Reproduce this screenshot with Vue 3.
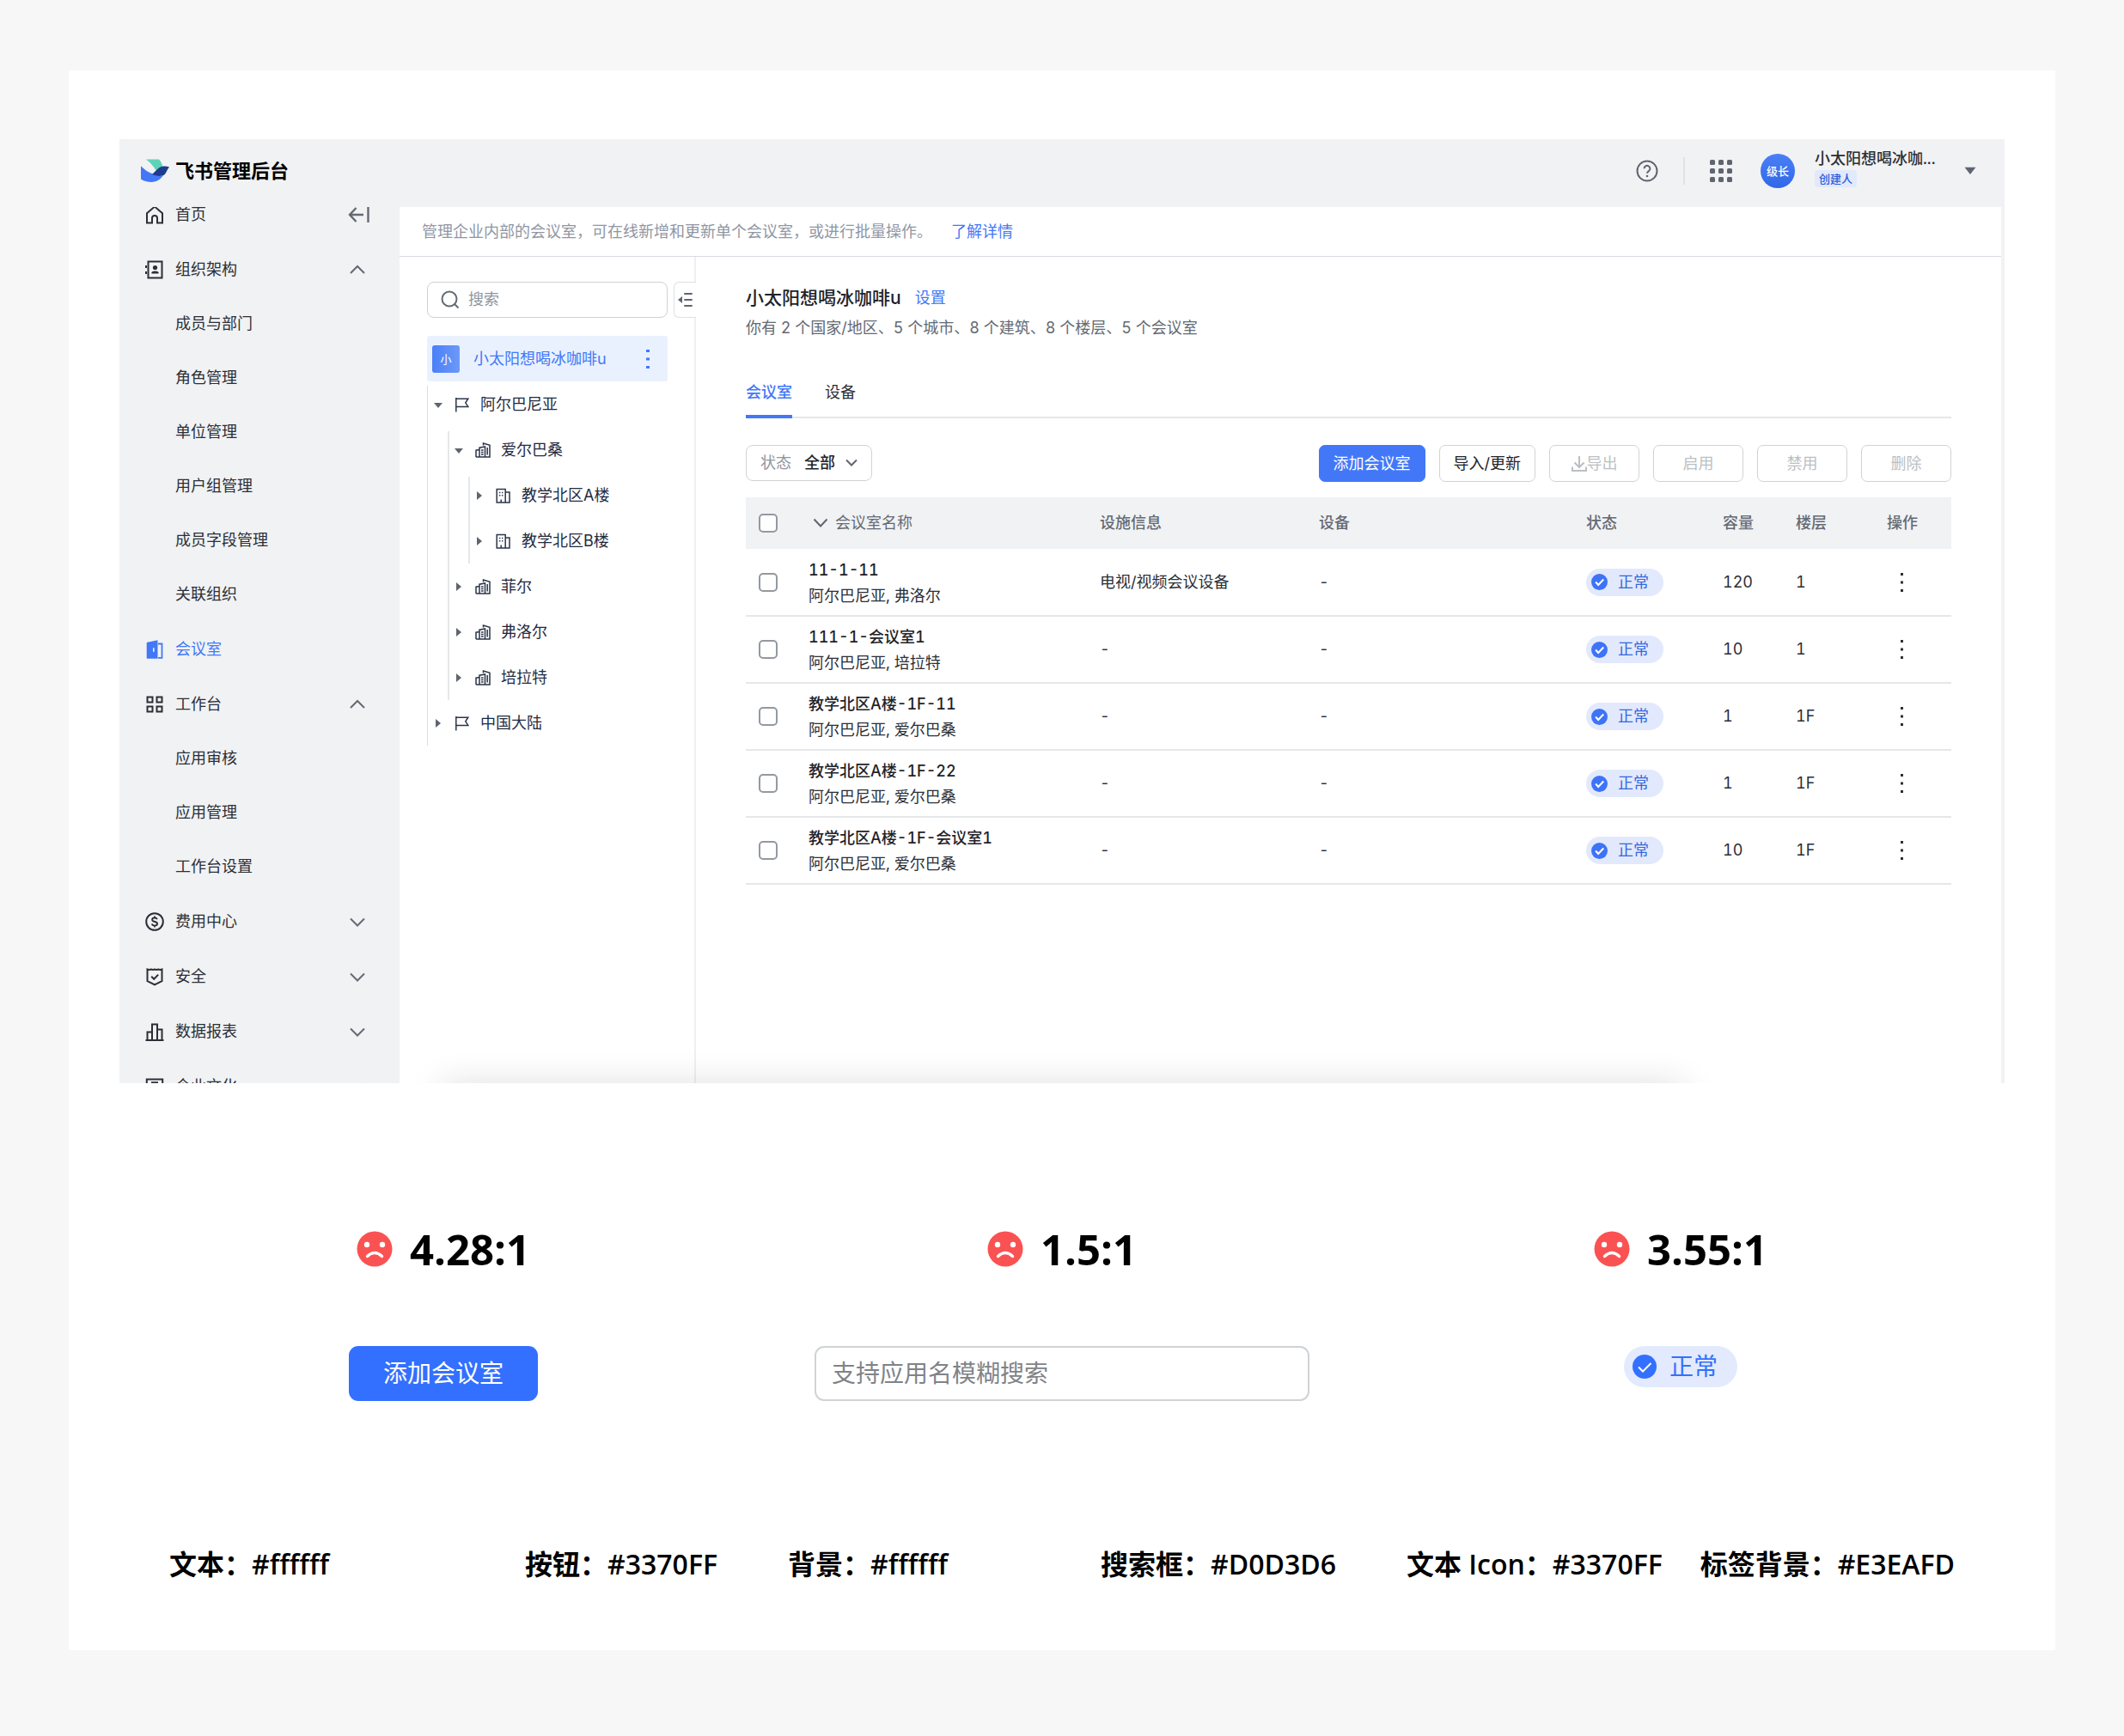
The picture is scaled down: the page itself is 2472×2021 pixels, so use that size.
<script setup>
import { ref } from 'vue'

const icons = {
  home: '<path d="M2 9.2 11 1.6l9 7.6V20.5h-6V15a3 3 0 0 0-6 0v5.500H2z"/>',
  org: '<path d="M3.500 1.500h16v19h-16z"/><path d="M1 6v3M1 13v3" stroke-width="2"/><circle cx="11.500" cy="8.500" r="2.600" fill="currentColor" stroke="none"/><path d="M7.500 15.500v-1.200c0-1 1.500-1.900 4-1.900s4 .9 4 1.900v1.200z" fill="currentColor" stroke="none"/>',
  room: '<path d="M2.500 2.700 14.500.2v21.600h-12a.8.8 0 0 1-.8-.8V3.500a.8.8 0 0 1 .8-.8zM9 9.200v4.600h1.600V9.200z" fill="currentColor" fill-rule="evenodd" stroke="none"/><path d="M15 4.500h4.500v16.300H15" stroke-width="1.800"/>',
  grid: '<path d="M2.500 2.500h6v6h-6zM13.500 2.500h6v6h-6zM2.500 13.500h6v6h-6zM13.500 13.500h6v6h-6z"/>',
  fee: '<circle cx="11" cy="11" r="9.800"/><path d="M13.900 8.300C13.500 7 12.400 6.500 11 6.500c-1.700 0-2.900.8-2.900 2.200 0 3.200 6 1.400 6 4.600 0 1.500-1.300 2.300-3.100 2.300-1.600 0-2.800-.6-3.200-2M11 4.500v2M11 15.500v2" stroke-width="1.800"/>',
  shield: '<path d="M2.500 2.500q2.200.8 4.300 0 2.200.8 4.200 0 2 .8 4.200 0 2.100.8 4.300 0v13.600L11 20.300l-8.500-4.200z"/><path d="m7.200 10.800 3 3 5-5.200"/>',
  bars: '<path d="M.5 21h21M2.500 21V11.500H8V21M8 21V2.500h6V21M14 8.500h5.500V21"/>',
  culture: '<path d="M1.800 2.500h18.400v17H1.800z"/><path d="M7 6.200h8M11 9v7"/>'
}

const nav = [
  { label: '首页', icon: 'home', end: 'collapse' },
  { label: '组织架构', icon: 'org', end: 'up', children: ['成员与部门', '角色管理', '单位管理', '用户组管理', '成员字段管理', '关联组织'] },
  { label: '会议室', icon: 'room', active: true },
  { label: '工作台', icon: 'grid', end: 'up', children: ['应用审核', '应用管理', '工作台设置'] },
  { label: '费用中心', icon: 'fee', end: 'down' },
  { label: '安全', icon: 'shield', end: 'down' },
  { label: '数据报表', icon: 'bars', end: 'down' },
  { label: '企业文化', icon: 'culture', end: 'down' }
]

const ends = {
  up: '<path d="m5 18 8-8 8 8"/>',
  down: '<path d="m5 10.500 8 8 8-8"/>',
  collapse: '<path d="M11.500 6 4 14l7.500 8M4 14h16M25.500 5v18" stroke-width="2.400"/>'
}

const treeIcons = {
  flag: '<path d="M1.800 1v16.500M1.800 2.200h14l-3 4.600 3 4.600h-14"/>',
  city: '<path d="M1 17V9.200l4-.7M5 17V6.200L11.500 5v12M9.500 3.500V1L17 3.200V17H1M7 9h2.600M7 11.500h2.600M7 14h2.600M14.200 6v8.500"/>',
  building: '<path d="M1.200 1.500h10V17h-10zM11.200 5H16v12h-4.800M4 5.500h1.400M7 5.500h1.400M4 8.700h1.400M7 8.700h1.400M6.200 17v-3.500"/>'
}

const tree = [
  {
    label: '阿尔巴尼亚', icon: 'flag', open: true, children: [
      {
        label: '爱尔巴桑', icon: 'city', open: true, children: [
          { label: '教学北区A楼', icon: 'building' },
          { label: '教学北区B楼', icon: 'building' }
        ]
      },
      { label: '菲尔', icon: 'city' },
      { label: '弗洛尔', icon: 'city' },
      { label: '培拉特', icon: 'city' }
    ]
  },
  { label: '中国大陆', icon: 'flag' }
]

const rooms = [
  { name: '11-1-11', place: '阿尔巴尼亚, 弗洛尔', facility: '电视/视频会议设备', device: '-', capacity: 120, floor: '1' },
  { name: '111-1-会议室1', place: '阿尔巴尼亚, 培拉特', facility: '-', device: '-', capacity: 10, floor: '1' },
  { name: '教学北区A楼-1F-11', place: '阿尔巴尼亚, 爱尔巴桑', facility: '-', device: '-', capacity: 1, floor: '1F' },
  { name: '教学北区A楼-1F-22', place: '阿尔巴尼亚, 爱尔巴桑', facility: '-', device: '-', capacity: 1, floor: '1F' },
  { name: '教学北区A楼-1F-会议室1', place: '阿尔巴尼亚, 爱尔巴桑', facility: '-', device: '-', capacity: 10, floor: '1F' }
]

const samples = [
  { kind: 'button', ratio: '4.28:1', colors: ['文本：#ffffff', '按钮：#3370FF'] },
  { kind: 'input', ratio: '1.5:1', colors: ['背景：#ffffff', '搜索框：#D0D3D6'] },
  { kind: 'tag', ratio: '3.55:1', colors: ['文本 Icon：#3370FF', '标签背景：#E3EAFD'] }
]

const status = ref('全部')
const caretDown = 'M0 3h10L5 9z'
const caretRight = 'M2 0v10l6-5z'
</script>

<template>
  <div class="page">
    <main class="card">
      <section class="app">
        <header class="topbar">
          <svg class="logo" viewBox="0 0 33 27" aria-hidden="true">
            <path d="M6 .4h15c2.200 2 4 6 4.600 9.200L18 14.500C15 8.500 11 4 6 .4z" fill="#5fd3b7" />
            <path d="M0 8.200c4 4.300 9 7.800 14 9.400 4 1.800 8 2.400 12 1.500C23 24 18 27 12.500 27 7.500 27 3 25.500 0 23.500z" fill="#4278f8" />
            <path d="M13 17.800C17 15 20 9.500 25 8.700c2.800-.5 5.600-.2 8 .8-2.600 2.700-3.300 6.700-6 9.300-3.800 1.800-9.500 1.500-14-1z" fill="#1d3c91" />
          </svg>
          <h1>飞书管理后台</h1>
          <div class="tools">
            <button class="plain" type="button" aria-label="帮助">
              <svg width="26" height="26" viewBox="0 0 26 26" fill="none" stroke="#5f6570" stroke-width="2">
                <circle cx="13" cy="13" r="11.500" />
                <path d="M9.600 10.300a3.400 3.400 0 1 1 5.300 2.800c-1.200.8-1.900 1.400-1.900 2.700" />
                <circle cx="13" cy="19" r="1.300" fill="#5f6570" stroke="none" />
              </svg>
            </button>
            <span class="divider"></span>
            <button class="plain" type="button" aria-label="应用">
              <svg width="26" height="26" viewBox="0 0 26 26" fill="#5f6570">
                <template v-for="y in 3" :key="y">
                  <rect v-for="x in 3" :key="x" :x="(x - 1) * 10" :y="(y - 1) * 10" width="6" height="6" rx="1.500" />
                </template>
              </svg>
            </button>
          </div>
          <span class="avatar">级长</span>
          <div class="user">
            <strong>小太阳想喝冰咖...</strong>
            <span class="badge">创建人</span>
          </div>
          <button class="plain" type="button" aria-label="账号菜单">
            <svg width="14" height="10" viewBox="0 0 14 10"><path d="M.5.800h13L7 9z" fill="#5f6570" /></svg>
          </button>
        </header>

        <nav class="sidebar">
          <ul class="menu">
            <li v-for="item in nav" :key="item.label">
              <a href="#" class="item" :class="{ active: item.active }">
                <svg class="item-icon" viewBox="0 0 22 22" v-html="icons[item.icon]"></svg>
                <span class="item-label">{{ item.label }}</span>
                <svg v-if="item.end" class="item-end" viewBox="0 0 28 28" v-html="ends[item.end]"></svg>
              </a>
              <a v-for="child in item.children" :key="child" href="#" class="item child">{{ child }}</a>
            </li>
          </ul>
        </nav>

        <div class="panel">
          <p class="banner">管理企业内部的会议室，可在线新增和更新单个会议室，或进行批量操作。<a href="#">了解详情</a></p>

          <aside class="places">
            <div class="search-row">
              <label class="search">
                <svg width="22" height="22" viewBox="0 0 22 22" fill="none" stroke="#646a73" stroke-width="2">
                  <circle cx="10" cy="10" r="8.500" /><path d="m16 16 4.500 4.500" />
                </svg>
                <input type="text" placeholder="搜索" aria-label="搜索" />
              </label>
              <button class="fold" type="button" aria-label="收起">
                <svg width="18" height="18" viewBox="0 0 18 18">
                  <path d="M0 9l5-4v8z" fill="#5f6570" />
                  <path d="M8 2h8M8 9h8M8 16h8" stroke="#5f6570" stroke-width="2" stroke-linecap="round" />
                </svg>
              </button>
            </div>
            <div class="company">
              <span class="company-logo">小</span>
              <a href="#">小太阳想喝冰咖啡u</a>
              <button class="plain" type="button" aria-label="更多">
                <svg width="4" height="22" viewBox="0 0 4 22" fill="#4278f8"><path d="M0 0h4v3H0zM0 9.500h4v3H0zM0 19h4v3H0z" /></svg>
              </button>
            </div>
            <ul class="branch">
              <li v-for="country in tree" :key="country.label">
                <div class="node">
                  <svg class="caret" viewBox="0 0 10 10"><path :d="country.open ? caretDown : caretRight" /></svg>
                  <svg class="node-icon" viewBox="0 0 18 18" v-html="treeIcons[country.icon]"></svg>
                  <span>{{ country.label }}</span>
                </div>
                <ul v-if="country.children" class="branch inner">
                  <li v-for="city in country.children" :key="city.label">
                    <div class="node">
                      <svg class="caret" viewBox="0 0 10 10"><path :d="city.open ? caretDown : caretRight" /></svg>
                      <svg class="node-icon" viewBox="0 0 18 18" v-html="treeIcons[city.icon]"></svg>
                      <span>{{ city.label }}</span>
                    </div>
                    <ul v-if="city.children" class="branch inner">
                      <li v-for="b in city.children" :key="b.label" class="node">
                        <svg class="caret" viewBox="0 0 10 10"><path :d="caretRight" /></svg>
                        <svg class="node-icon" viewBox="0 0 18 18" v-html="treeIcons[b.icon]"></svg>
                        <span>{{ b.label }}</span>
                      </li>
                    </ul>
                  </li>
                </ul>
              </li>
            </ul>
          </aside>

          <section class="content">
            <div class="heading">
              <h2>小太阳想喝冰咖啡u</h2>
              <a href="#">设置</a>
            </div>
            <p class="summary">你有 2 个国家/地区、5 个城市、8 个建筑、8 个楼层、5 个会议室</p>
            <div class="tabs" role="tablist">
              <button class="tab current" type="button" role="tab" aria-selected="true">会议室</button>
              <button class="tab" type="button" role="tab" aria-selected="false">设备</button>
            </div>
            <div class="toolbar">
              <div class="filter">
                <label for="status">状态</label>
                <select id="status" v-model="status"><option>全部</option></select>
                <svg width="14" height="10" viewBox="0 0 14 10" fill="none" stroke="#5f6570" stroke-width="2"><path d="m1 1.500 6 6 6-6" /></svg>
              </div>
              <button class="btn primary" type="button">添加会议室</button>
              <button class="btn" type="button">导入/更新</button>
              <button class="btn" type="button" disabled>
                <svg width="18" height="20" viewBox="0 0 18 20" fill="none" stroke="currentColor" stroke-width="2">
                  <path d="M9 1v13M3.500 8.500 9 14l5.500-5.500M1 13.500V18h16v-4.500" />
                </svg>导出
              </button>
              <button class="btn" type="button" disabled>启用</button>
              <button class="btn" type="button" disabled>禁用</button>
              <button class="btn" type="button" disabled>删除</button>
            </div>
            <table>
              <colgroup>
                <col class="c-check" /><col class="c-name" /><col class="c-facility" /><col />
                <col class="c-status" /><col class="c-capacity" /><col class="c-floor" /><col class="c-action" />
              </colgroup>
              <thead>
                <tr>
                  <th class="check"><input type="checkbox" aria-label="全选" /></th>
                  <th>
                    <span class="sort">
                      <svg width="18" height="12" viewBox="0 0 18 12" fill="none" stroke="#5f6570" stroke-width="2"><path d="m1.500 1.500 7.500 8 7.500-8" /></svg>
                      会议室名称
                    </span>
                  </th>
                  <th>设施信息</th>
                  <th>设备</th>
                  <th>状态</th>
                  <th>容量</th>
                  <th>楼层</th>
                  <th>操作</th>
                </tr>
              </thead>
              <tbody>
                <tr v-for="room in rooms" :key="room.name">
                  <td class="check"><input type="checkbox" :aria-label="room.name" /></td>
                  <td class="title"><div class="name">{{ room.name }}</div><div>{{ room.place }}</div></td>
                  <td>{{ room.facility }}</td>
                  <td>{{ room.device }}</td>
                  <td>
                    <span class="tag">
                      <svg viewBox="0 0 28 28"><circle cx="14" cy="14" r="14" /><path d="m7.500 14 4.500 5 9-9.500" stroke-width="3" /></svg>正常
                    </span>
                  </td>
                  <td>{{ room.capacity }}</td>
                  <td>{{ room.floor }}</td>
                  <td>
                    <button class="plain more" type="button" aria-label="更多操作">
                      <svg width="4" height="22" viewBox="0 0 4 22" fill="#2b2f36"><path d="M0 0h3v3H0zM0 9.500h3v3H0zM0 19h3v3H0z" /></svg>
                    </button>
                  </td>
                </tr>
              </tbody>
            </table>
          </section>
        </div>
      </section>

      <section class="samples">
        <article v-for="s in samples" :key="s.ratio" class="sample">
          <div class="score">
            <svg width="42" height="42" viewBox="0 0 42 42">
              <circle cx="21" cy="21" r="20.500" fill="#fa5252" />
              <circle cx="12" cy="16" r="3.200" fill="#fff" /><circle cx="30" cy="16" r="3.200" fill="#fff" />
              <path d="M12.500 29.500q8.500-8 17 0" fill="none" stroke="#fff" stroke-width="3.400" stroke-linecap="round" />
            </svg>
            <strong>{{ s.ratio }}</strong>
          </div>
          <div class="demo">
            <button v-if="s.kind === 'button'" class="demo-button" type="button">添加会议室</button>
            <input v-else-if="s.kind === 'input'" class="demo-input" type="text" placeholder="支持应用名模糊搜索" aria-label="支持应用名模糊搜索" />
            <span v-else class="tag large">
              <svg viewBox="0 0 28 28"><circle cx="14" cy="14" r="14" /><path d="m7 14.500 5 5 9.500-9.500" stroke-width="2" /></svg>正常
            </span>
          </div>
          <div class="colors"><span v-for="c in s.colors" :key="c">{{ c }}</span></div>
        </article>
      </section>
    </main>
  </div>
</template>

<style>
body {
  background: #f7f7f7;
}
</style>

<style scoped>
* {
  box-sizing: border-box;
  margin: 0;
  padding: 0;
}
.page {
  padding: 82px 80px 100px;
  background: #f7f7f7;
  color: #2b2f36;
  font-family: "Inter", "Noto Sans CJK SC", sans-serif;
  font-size: 18px;
  line-height: 30px;
  font-variant-numeric: tabular-nums;
}
.card {
  padding: 80px 59px 78px;
  background: #fff;
}
a {
  color: #4278f8;
  text-decoration: none;
}
ul {
  list-style: none;
}
button,
input,
select {
  font: inherit;
  color: inherit;
}
svg {
  display: block;
  flex: none;
}
.plain {
  display: flex;
  border: 0;
  background: none;
}

/* Admin console window */
.app {
  display: grid;
  grid-template-columns: 326px minmax(0, 1fr);
  grid-template-rows: 79px minmax(0, 1fr);
  aspect-ratio: 2194 / 1099;
  padding-right: 4px;
  background: #f1f2f4;
  overflow: hidden;
}
.topbar {
  grid-column: 1 / -1;
  display: flex;
  align-items: center;
  padding: 0 29px 6px 25px;
}
.logo {
  width: 33px;
  height: 27px;
}
h1 {
  margin-left: 7px;
  color: #000;
  font-size: 22px;
  font-weight: 700;
}
.tools {
  display: flex;
  align-items: center;
  gap: 33px;
  margin: 0 33px 0 auto;
}
.divider {
  width: 2px;
  height: 32px;
  margin-right: -4px;
  margin-left: -4px;
  background: #dfe1e4;
}
.avatar {
  width: 40px;
  height: 40px;
  border-radius: 50%;
  background: linear-gradient(#4a7ff7, #3168e6);
  color: #fff;
  font-size: 13px;
  font-weight: 500;
  line-height: 40px;
  text-align: center;
}
.user {
  display: flex;
  flex-direction: column;
  align-items: flex-start;
  min-width: 148px;
  margin: 0 26px 0 23px;
  padding-bottom: 8px;
}
.user strong {
  font-weight: 500;
  line-height: 26px;
}
.badge {
  padding: 0 5px;
  border-radius: 4px;
  background: #e1e9fc;
  color: #2a5bd7;
  font-size: 13px;
  font-weight: 500;
  line-height: 20px;
}

.sidebar {
  min-height: 0;
  overflow: hidden;
}
.menu {
  display: flex;
  flex-direction: column;
  gap: 1px;
  margin-top: -23px;
}
.item {
  display: flex;
  align-items: center;
  height: 63px;
  padding: 0 34px 0 30px;
  color: #2b2f36;
  line-height: 16px;
}
.item.active {
  color: #4278f8;
}
.item.child {
  padding-left: 65px;
}
.item-icon {
  width: 22px;
  height: 22px;
  margin-right: 13px;
  fill: none;
  stroke: currentColor;
  stroke-width: 2;
}
.item-label {
  flex: 1;
}
.item-end {
  width: 28px;
  height: 28px;
  fill: none;
  stroke: #646a73;
  stroke-width: 2;
}

.panel {
  position: relative;
  display: grid;
  grid-template-columns: 345px minmax(0, 1fr);
  grid-template-rows: 58px minmax(0, 1fr);
  background: #fff;
  overflow: hidden;
}
/* Soft shadow of a floating layer just below the visible area */
.panel::after {
  content: "";
  position: absolute;
  right: 370px;
  bottom: -34px;
  left: 50px;
  height: 30px;
  box-shadow: 0 0 40px rgba(31, 35, 41, 0.18);
}
.banner {
  grid-column: 1 / -1;
  display: flex;
  align-items: center;
  gap: 22px;
  padding-left: 26px;
  border-bottom: 1px solid #dadce2;
  color: #8f96a3;
}
.places {
  padding: 29px 0 0 32px;
  border-right: 2px solid #eff0f2;
  color: #1f2b3f;
}
.search-row {
  display: flex;
  gap: 7px;
  margin-right: -2px;
}
.search {
  display: flex;
  flex: 1;
  align-items: center;
  gap: 10px;
  min-width: 0;
  height: 42px;
  padding-left: 15px;
  border: 1px solid #cfd1d6;
  border-radius: 8px;
}
.search input {
  flex: 1;
  min-width: 0;
  border: 0;
  outline: 0;
  background: none;
}
.search input::placeholder {
  color: #8f959e;
}
.fold {
  display: flex;
  align-items: center;
  width: 26px;
  height: 42px;
  padding-left: 4px;
  border: 1px solid #dee0e3;
  border-right: 0;
  border-radius: 6px 0 0 6px;
  background: #fff;
}
.company {
  display: flex;
  align-items: center;
  height: 53px;
  margin: 21px 31px 0 0;
  padding: 0 21px 0 6px;
  border-radius: 3px;
  background: #eaf1fe;
}
.company-logo {
  width: 32px;
  height: 32px;
  margin-right: 16px;
  border-radius: 3px;
  background: linear-gradient(90deg, #4a7ff7, #6c99f8);
  color: #fff;
  font-size: 13px;
  line-height: 32px;
  text-align: center;
}
.company a {
  flex: 1;
}
.branch {
  background: linear-gradient(#dcdee2, #dcdee2) 0 5px / 1px 100% no-repeat;
}
.branch.inner {
  margin-left: 24px;
  background: linear-gradient(#e6e7e9, #e6e7e9) 0 5px / 2px 100% no-repeat;
}
.node {
  display: flex;
  align-items: center;
  height: 53px;
  padding-left: 8px;
}
.caret {
  width: 10px;
  height: 10px;
  margin-right: 14px;
  fill: #5f6570;
}
.node-icon {
  width: 18px;
  height: 18px;
  margin-right: 12px;
  fill: none;
  stroke: #2b3648;
  stroke-width: 1.500;
}

.content {
  padding: 33px 58px 0;
}
.heading {
  display: flex;
  align-items: center;
  gap: 16px;
}
h2 {
  color: #1f2329;
  font-size: 21px;
  font-weight: 500;
}
.summary {
  margin-top: 5px;
  color: #646a73;
}
.tabs {
  display: flex;
  gap: 38px;
  margin-top: 44px;
  border-bottom: 2px solid #e5e6e8;
}
.tab {
  height: 46px;
  margin-bottom: -2px;
  padding-bottom: 11px;
  border: 0;
  border-bottom: 4px solid transparent;
  background: none;
}
.tab.current {
  border-image: linear-gradient(#4278f8, #4278f8) 1;
  color: #4278f8;
  font-weight: 500;
}
.toolbar {
  display: flex;
  gap: 16px;
  margin: 31px 0 18px;
}
.filter {
  display: flex;
  align-items: center;
  width: 147px;
  height: 42px;
  margin-right: auto;
  padding-left: 16px;
  border: 1px solid #d0d3d6;
  border-radius: 8px;
}
.filter label {
  margin-right: 15px;
  color: #8f959e;
}
.filter select {
  width: 48px;
  border: 0;
  outline: 0;
  background: none;
  appearance: none;
  color: #1f2329;
  font-weight: 500;
}
.btn {
  display: flex;
  align-items: center;
  justify-content: center;
  min-width: 105px;
  height: 43px;
  padding: 0 16px;
  border: 1px solid #d0d3d6;
  border-radius: 7px;
  background: #fff;
  color: #1f2329;
}
.btn:disabled {
  color: #bbbfc4;
}
.btn.primary {
  border-color: #4278f8;
  background: #4278f8;
  color: #fff;
}
table {
  width: 100%;
  border-collapse: collapse;
  table-layout: fixed;
}
.c-check {
  width: 73px;
}
.c-name {
  width: 339px;
}
.c-facility {
  width: 255px;
}
.c-status {
  width: 159px;
}
.c-capacity {
  width: 85px;
}
.c-floor {
  width: 106px;
}
.c-action {
  width: 75px;
}
th {
  height: 60px;
  background: #f1f2f4;
  color: #646a73;
  font-weight: 500;
  text-align: left;
}
th:nth-child(2) {
  font-weight: 400;
}
td {
  height: 78px;
  border-bottom: 2px solid #e6e7e9;
}
.title {
  padding-top: 2px;
}
.check {
  padding-left: 15px;
}
.check input {
  display: block;
  width: 22px;
  height: 22px;
  border: 2px solid #9399a1;
  border-radius: 5px;
  background: #fff;
  appearance: none;
}
.sort {
  display: flex;
  align-items: center;
  gap: 8px;
  padding-left: 5px;
}
.name {
  color: #1f2329;
  font-weight: 500;
}
.tag {
  display: flex;
  align-items: center;
  gap: 12px;
  width: 90px;
  height: 32px;
  padding-left: 6px;
  border-radius: 16px;
  background: #e2e9fd;
  color: #3468dd;
}
.tag svg {
  width: 19px;
  height: 19px;
  fill: #3d73f7;
}
.tag path {
  fill: none;
  stroke: #fff;
}
.more {
  justify-content: center;
  width: 36px;
}

/* Contrast samples */
.samples {
  display: grid;
  grid-template-columns: repeat(3, minmax(0, 1fr));
  gap: 82px;
  padding: 163px 58px 0;
}
.score {
  display: flex;
  align-items: center;
  justify-content: center;
  gap: 20px;
  color: #000;
  font-family: "Open Sans", "Noto Sans CJK SC", sans-serif;
  font-size: 49px;
  line-height: 60px;
}
.demo {
  display: flex;
  align-items: flex-start;
  justify-content: center;
  height: 64px;
  margin: 83px 0 168px;
  font-size: 28px;
}
.demo-button {
  width: 220px;
  height: 64px;
  border: 0;
  border-radius: 11px;
  background: #3370ff;
  color: #fff;
}
.demo-input {
  width: 576px;
  height: 64px;
  padding: 0 18px;
  border: 2px solid #d0d3d6;
  border-radius: 11px;
  outline: 0;
  background: #fff;
}
.demo-input::placeholder {
  color: #7f8388;
}
.tag.large {
  gap: 15px;
  width: 132px;
  height: 48px;
  padding-left: 10px;
  border-radius: 24px;
  background: #e3eafd;
  color: #3370ff;
}
.tag.large svg {
  width: 28px;
  height: 28px;
  fill: #3370ff;
}
.colors {
  display: flex;
  justify-content: space-between;
  color: #000;
  font-family: "Open Sans", "Noto Sans CJK SC", sans-serif;
  font-size: 32px;
  font-weight: 600;
  line-height: 44px;
  white-space: nowrap;
}
</style>
